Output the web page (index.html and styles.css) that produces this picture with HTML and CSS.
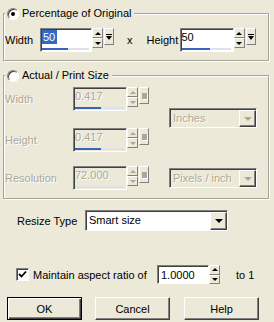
FILE: index.html
```html
<!DOCTYPE html>
<html lang="en">

<head>
    <meta charset="UTF-8">
    <title>Resize</title>
    <link rel="stylesheet" href="styles.css">
</head>

<body>
    <fieldset class="group group-pct">
        <legend><span class="radio checked"></span>Percentage of Original</legend>
        <div class="row">
            <span class="lbl lbl-width">Width</span>
            <div class="spin">
                <div class="edit edit-sm">
                    <span class="value"><span class="selected">50</span></span>
                    <div class="track"><div class="fill" style="width: 26px"></div></div>
                </div>
                <div class="updown">
                    <span class="arrow-btn"><i class="up"></i></span>
                    <span class="arrow-btn"><i class="down"></i></span>
                </div>
                <span class="pop"></span>
            </div>
            <span class="times">x</span>
            <span class="lbl lbl-height">Height</span>
            <div class="spin">
                <div class="edit">
                    <span class="value">50</span>
                    <div class="track"><div class="fill" style="width: 28px"></div></div>
                </div>
                <div class="updown">
                    <span class="arrow-btn"><i class="up"></i></span>
                    <span class="arrow-btn"><i class="down"></i></span>
                </div>
                <span class="pop"></span>
            </div>
        </div>
    </fieldset>

    <fieldset class="group group-size">
        <legend><span class="radio"></span>Actual / Print Size</legend>
        <div class="size-grid">
            <span class="lbl disabled r1">Width</span>
            <div class="spin disabled r1">
                <div class="edit">
                    <span class="value">0.417</span>
                    <div class="track"><div class="fill" style="width: 26px"></div></div>
                </div>
                <div class="updown">
                    <span class="arrow-btn"><i class="up"></i></span>
                    <span class="arrow-btn"><i class="down"></i></span>
                </div>
                <span class="pop"></span>
            </div>
            <div class="combo disabled combo-units"><span class="combo-text">Inches</span><span class="drop"><i class="down"></i></span></div>

            <span class="lbl disabled r2">Height</span>
            <div class="spin disabled r2">
                <div class="edit">
                    <span class="value">0.417</span>
                    <div class="track"><div class="fill" style="width: 26px"></div></div>
                </div>
                <div class="updown">
                    <span class="arrow-btn"><i class="up"></i></span>
                    <span class="arrow-btn"><i class="down"></i></span>
                </div>
                <span class="pop"></span>
            </div>

            <span class="lbl disabled r3">Resolution</span>
            <div class="spin disabled r3">
                <div class="edit">
                    <span class="value">72.000</span>
                    <div class="track"><div class="fill" style="width: 0"></div></div>
                </div>
                <div class="updown">
                    <span class="arrow-btn"><i class="up"></i></span>
                    <span class="arrow-btn"><i class="down"></i></span>
                </div>
                <span class="pop"></span>
            </div>
            <div class="combo disabled combo-res"><span class="combo-text">Pixels / inch</span><span class="drop"><i class="down"></i></span></div>
        </div>
    </fieldset>

    <div class="resize-row">
        <span class="lbl lbl-resize">Resize Type</span>
        <div class="combo combo-type"><span class="combo-text">Smart size</span><span class="drop"><i class="down"></i></span></div>
    </div>

    <div class="aspect-row">
        <span class="checkbox">
            <svg width="9" height="9" viewBox="0 0 9 9"><path d="M1 4l2.5 2.5L8 1.5" fill="none" stroke="#000" stroke-width="1.8"/></svg>
        </span>
        <span class="aspect-label">Maintain aspect ratio of</span>
        <div class="spin">
            <div class="edit edit-sm edit-plain">
                <span class="value">1.0000</span>
            </div>
            <div class="updown updown-sm">
                <span class="arrow-btn"><i class="up"></i></span>
                <span class="arrow-btn"><i class="down"></i></span>
            </div>
        </div>
        <span class="to-one">to 1</span>
    </div>

    <div class="buttons">
        <button class="push default">OK</button>
        <button class="push">Cancel</button>
        <button class="push help">Help</button>
    </div>
</body>

</html>
```

FILE: styles.css
```css
body {
    margin: 0;
    width: 274px;
    height: 322px;
    overflow: hidden;
    background-color: #ece9d8;
    font-family: "Liberation Sans", Arial, sans-serif;
    font-size: 11px;
    color: #000;
}

/* group boxes */

.group {
    margin: 0 5px 0 3px;
    padding: 0 0 8px 1px;
    border: 1px solid #a5a296;
    box-shadow: 1px 1px 0 #fff, inset 1px 1px 0 #fff;
    min-width: 0;
}

.group-pct {
    margin-top: 7px;
    padding-top: 8px;
}

.group-size {
    margin-top: 8px;
    padding-top: 5px;
}

legend {
    display: flex;
    align-items: center;
    height: 13px;
    line-height: 13px;
    padding: 0 3px 0 2px;
    background-color: #ece9d8;
}

.radio {
    position: relative;
    width: 12px;
    height: 12px;
    margin-right: 3px;
    box-sizing: border-box;
    border-radius: 50%;
    border: 1px solid;
    border-color: #808080 #fff #fff #808080;
    background-color: #fff;
    box-shadow: inset 1px 1px 0 #404040;
}

.radio.checked::after {
    content: "";
    position: absolute;
    left: 3px;
    top: 3px;
    width: 4px;
    height: 4px;
    border-radius: 50%;
    background-color: #000;
}

.row {
    display: flex;
    align-items: center;
    height: 24px;
}

.lbl {
    white-space: nowrap;
}

.lbl-width {
    width: 35px;
}

.times {
    margin-left: 13px;
}

.lbl-height {
    width: 33px;
    margin-left: 14px;
}

.disabled,
.disabled .value {
    color: #aca899;
    text-shadow: 1px 1px 0 #fff;
}

/* spin edits */

.spin {
    display: flex;
    align-items: flex-start;
}

.edit {
    display: flex;
    flex-direction: column;
    justify-content: space-between;
    width: 54px;
    height: 24px;
    box-sizing: border-box;
    padding-top: 1px;
    border: 1px solid;
    border-color: #808080 #fff #fff #808080;
    box-shadow: inset 1px 1px 0 #404040;
    background-color: #fff;
}

.edit-sm {
    width: 52px;
}

.spin.disabled .edit {
    background-color: #ece9d8;
}

.value {
    padding-left: 1px;
    line-height: 14px;
    color: #000;
}

.selected {
    display: inline-block;
    padding: 0 2px 0 1px;
    color: #fff;
    background-color: #316ac5;
}

.track {
    height: 2px;
    margin: 0 2px 1px 1px;
    background-color: #dde1ea;
}

.fill {
    height: 2px;
    background-color: #3a64b8;
}

.edit-plain {
    height: 19px;
    justify-content: center;
    padding: 0 0 0 2px;
}

.updown {
    display: flex;
    flex-direction: column;
    width: 11px;
    height: 20px;
}

.updown-sm {
    height: 19px;
}

.arrow-btn,
.pop,
.drop {
    display: flex;
    align-items: center;
    justify-content: center;
    box-sizing: border-box;
    border: 1px solid;
    border-color: #fff #808080 #808080 #fff;
    background-color: #ece9d8;
}

.arrow-btn {
    flex: 1;
}

i.up,
i.down {
    width: 0;
    height: 0;
    border-left: 3px solid transparent;
    border-right: 3px solid transparent;
}

i.up {
    border-bottom: 3px solid #000;
}

i.down {
    border-top: 3px solid #000;
}

.disabled i.up {
    border-bottom-color: #aca899;
}

.disabled i.down {
    border-top-color: #aca899;
}

.pop {
    flex-direction: column;
    gap: 1px;
    width: 10px;
    height: 17px;
    margin-left: 1px;
}

.pop::before {
    content: "";
    width: 6px;
    height: 1px;
    background-color: #000;
}

.pop::after {
    content: "";
    border-left: 3px solid transparent;
    border-right: 3px solid transparent;
    border-top: 4px solid #000;
}

.spin.disabled .pop::before {
    display: none;
}

.spin.disabled .pop::after {
    width: 5px;
    height: 6px;
    border: 0;
    background-color: #aca899;
    box-shadow: 1px 1px 0 #fff;
}

/* actual size grid */

.size-grid {
    display: grid;
    grid-template-columns: 68px 96px 88px;
    grid-template-rows: 41px 38px 24px;
}

.size-grid .lbl {
    align-self: start;
    line-height: 24px;
}

.r1 {
    grid-row: 1;
}

.r2 {
    grid-row: 2;
}

.r3 {
    grid-row: 3;
}

.combo {
    display: flex;
    box-sizing: border-box;
    height: 20px;
    border: 1px solid;
    border-color: #808080 #fff #fff #808080;
    box-shadow: inset 1px 1px 0 #404040;
    padding: 1px 0 0 1px;
    background-color: #fff;
}

.combo.disabled {
    background-color: #ece9d8;
}

.combo-text {
    flex: 1;
    padding-left: 2px;
    line-height: 17px;
    white-space: nowrap;
    overflow: hidden;
}

.drop {
    width: 17px;
    border-color: #fff #404040 #404040 #fff;
    box-shadow: inset -1px -1px 0 #808080;
}

.drop i.down {
    border-left-width: 4px;
    border-right-width: 4px;
    border-top-width: 4px;
}

.combo-units {
    grid-row: 1;
    grid-column: 3;
    align-self: start;
    margin-top: 21px;
}

.combo-res {
    grid-row: 3;
    grid-column: 3;
    align-self: start;
    margin-top: 2px;
}

/* resize type */

.resize-row {
    display: flex;
    align-items: center;
    margin-top: 11px;
    padding-left: 17px;
}

.lbl-resize {
    width: 68px;
}

.combo-type {
    width: 143px;
    height: 21px;
}

/* aspect ratio */

.aspect-row {
    display: flex;
    align-items: center;
    margin-top: 34px;
    padding-left: 16px;
}

.checkbox {
    display: flex;
    align-items: center;
    justify-content: center;
    width: 13px;
    height: 13px;
    box-sizing: border-box;
    border: 1px solid;
    border-color: #808080 #fff #fff #808080;
    box-shadow: inset 1px 1px 0 #404040;
    background-color: #fff;
}

.aspect-label {
    width: 124px;
    margin-left: 4px;
    white-space: nowrap;
}

.to-one {
    margin-left: 16px;
}

/* dialog buttons */

.buttons {
    display: flex;
    gap: 13px;
    margin-top: 13px;
    padding-left: 7px;
}

.push {
    width: 75px;
    height: 23px;
    padding: 0;
    box-sizing: border-box;
    font-family: "Liberation Sans", Arial, sans-serif;
    font-size: 11px;
    color: #000;
    background-color: #ece9d8;
    border: 1px solid;
    border-color: #fff #404040 #404040 #fff;
    box-shadow: inset -1px -1px 0 #808080;
}

.push.default {
    border-color: #000;
    box-shadow: inset 1px 1px 0 #fff, inset -1px -1px 0 #404040, inset -2px -2px 0 #808080;
}

.push.help {
    margin-left: 1px;
}
```
